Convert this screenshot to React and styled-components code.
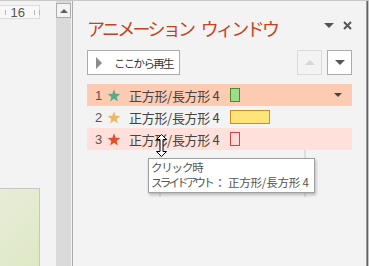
import styled, { createGlobalStyle } from "styled-components";

const Global = createGlobalStyle`
  html, body { margin: 0; padding: 0; }
  body {
    background: #f3f3f3;
    font-family: "Noto Sans CJK JP", "Liberation Sans", sans-serif;
    color: #444;
  }
`;

const Screen = styled.div`
  width: 369px;
  height: 266px;
  border-top: 1px solid #c8c8c8;
  box-sizing: border-box;
  display: flex;
  overflow: hidden;
  position: relative;
`;

const SlideArea = styled.div`
  width: 56px;
  display: flex;
  flex-direction: column;
`;

const Ruler = styled.div`
  width: 40px;
  height: 14px;
  margin-top: 4px;
  background: #f8f8f8;
  border: 1px solid #dcdcdc;
  border-left: none;
  box-sizing: border-box;
  display: flex;
  align-items: center;
  font-size: 13px;
  color: #555;
  font-family: "Liberation Sans", sans-serif;
  span { margin: 0 5px 0 5px; }
  i {
    width: 1px;
    height: 5px;
    background: #b8b8b8;
    margin-left: 4px;
  }
  i:first-child { margin-left: 5px; }
`;

const SlideThumb = styled.div`
  margin-top: auto;
  width: 40px;
  height: 78px;
  border: 1px solid #c6c6c6;
  border-left: none;
  border-bottom: none;
  box-sizing: border-box;
  background: linear-gradient(135deg, #e7edd6 0%, #dfe8c6 100%);
`;

const Scrollbar = styled.div`
  width: 15px;
  background: #dadada;
  padding-top: 2px;
`;

const ScrollButton = styled.div`
  width: 15px;
  height: 15px;
  box-sizing: border-box;
  background: #f3f3f3;
  border: 1px solid #acacac;
  display: flex;
  align-items: center;
  justify-content: center;
  &::after {
    content: "";
    border-left: 4px solid transparent;
    border-right: 4px solid transparent;
    border-bottom: 4px solid #606060;
  }
`;

const Divider = styled.div`
  width: 1px;
  margin-left: 1px;
  background: #a9a9a9;
`;

const Panel = styled.div`
  flex: 1;
  padding: 15px 14px 0 14px;
  display: flex;
  flex-direction: column;
  position: relative;
`;

const Header = styled.div`
  display: flex;
  align-items: flex-start;
  height: 34px;
`;

const Title = styled.h1`
  margin: 0;
  font-size: 18px;
  font-weight: normal;
  letter-spacing: -2.7px;
  word-spacing: 6px;
  line-height: 24px;
  color: #c4421d;
  white-space: pre;
`;

const HeaderIcons = styled.div`
  margin-left: auto;
  display: flex;
  align-items: center;
  gap: 9px;
  margin-top: 5px;
`;

const Caret = styled.span`
  width: 0;
  height: 0;
  border-left: ${(p) => p.$size}px solid transparent;
  border-right: ${(p) => p.$size}px solid transparent;
  border-top: ${(p) => p.$size}px solid ${(p) => p.$color || "#555"};
`;

const Toolbar = styled.div`
  display: flex;
  align-items: center;
  height: 25px;
`;

const PlayButton = styled.button`
  height: 25px;
  width: 93px;
  flex: none;
  box-sizing: border-box;
  background: #fff;
  border: 1px solid #ababab;
  display: flex;
  align-items: center;
  padding: 0 0 0 8px;
  font-family: inherit;
  font-size: 11.5px;
  letter-spacing: -1.7px;
  color: #333;
  white-space: nowrap;
  &::before {
    content: "";
    border-top: 6px solid transparent;
    border-bottom: 6px solid transparent;
    border-left: 6px solid #8c8c8c;
    margin-right: 12px;
  }
`;

const MoveButton = styled.div`
  width: 25px;
  height: 25px;
  box-sizing: border-box;
  background: ${(p) => (p.$disabled ? "#f3f3f3" : "#fff")};
  border: 1px solid ${(p) => (p.$disabled ? "#dadada" : "#ababab")};
  display: flex;
  align-items: center;
  justify-content: center;
  margin-left: ${(p) => (p.$push ? "auto" : `${p.$gap || 0}px`)};
`;

const UpCaret = styled.span`
  border-left: 5px solid transparent;
  border-right: 5px solid transparent;
  border-bottom: 5px solid #d6d6d6;
`;

const List = styled.div`
  margin-top: 9px;
  display: flex;
  flex-direction: column;
`;

const Row = styled.div`
  height: 22px;
  display: flex;
  align-items: center;
  padding: 0 8px;
  background: ${(p) => p.$bg || "transparent"};
  font-size: 13px;
  color: #444;
`;

const Num = styled.span`
  width: 7px;
  font-family: "Liberation Sans", sans-serif;
  font-size: 13px;
  color: #555;
`;

const StarIcon = styled.svg`
  margin-left: 5px;
  margin-right: 8px;
  flex: none;
`;

const Name = styled.span`
  width: 101px;
  white-space: pre;
  letter-spacing: -0.3px;
`;

const Bar = styled.span`
  height: ${(p) => p.$h}px;
  width: ${(p) => p.$w}px;
  box-sizing: border-box;
  background: ${(p) => p.$fill};
  border: 1px solid ${(p) => p.$line};
`;

const RowCaret = styled.span`
  margin-left: auto;
  margin-right: 2px;
  border-left: 4px solid transparent;
  border-right: 4px solid transparent;
  border-top: 4px solid #444;
`;

const Ticks = styled.div`
  margin-left: 72px;
  width: 147px;
  height: 47px;
  display: flex;
  justify-content: space-between;
  i {
    width: 2px;
    background: #dedede;
  }
`;

const Tooltip = styled.div`
  position: absolute;
  left: 75px;
  top: 157px;
  width: 167px;
  height: 35px;
  box-sizing: border-box;
  background: #fff;
  border: 1px solid #a0a0a0;
  box-shadow: 1px 2px 3px rgba(0, 0, 0, 0.25);
  padding: 1px 2px;
  font-size: 11.5px;
  letter-spacing: -0.2px;
  line-height: 15px;
  color: #555;
  white-space: pre;
`;

const Kana = styled.span`
  letter-spacing: ${(p) => p.$tight}px;
`;

const Cursor = styled.svg`
  position: absolute;
  left: 156px;
  top: 133px;
`;

const RightEdge = styled.div`
  width: 3px;
  background: linear-gradient(90deg, #9a9a9a 0 1px, #b8452a 1px 2px, #c4c4c4 2px 3px);
`;

const Star = ({ color }) => (
  <StarIcon width="14" height="13" viewBox="0 0 14 13.5">
    <polygon
      fill={color}
      points="7,0.3 8.7,4.95 13.66,5.14 9.76,8.2 11.1,12.96 7,10.2 2.88,12.96 4.24,8.2 0.34,5.14 5.3,4.95"
    />
  </StarIcon>
);

const rows = [
  { n: 1, star: "#58a98c", bg: "#fccbb2", bar: { w: 10, h: 14, fill: "#9ddc88", line: "#4c8a2e" }, caret: true },
  { n: 2, star: "#ecb865", bg: "transparent", bar: { w: 40, h: 14, fill: "#ffe47a", line: "#d08c1c" } },
  { n: 3, star: "#e0502e", bg: "#ffe0da", bar: { w: 10, h: 14, fill: "#ffd8d6", line: "#c8464a" } },
];

export default function App() {
  return (
    <>
      <Global />
      <Screen>
        <SlideArea>
          <Ruler>
            <i />
            <span>16</span>
            <i />
            <i />
          </Ruler>
          <SlideThumb />
        </SlideArea>
        <Scrollbar>
          <ScrollButton />
        </Scrollbar>
        <Divider />
        <Panel>
          <Header>
            <Title>アニメーション ウィンドウ</Title>
            <HeaderIcons>
              <Caret $size={5} $color="#555" />
              <svg width="9" height="9" viewBox="0 0 9 9">
                <path d="M1 1 L8 8 M8 1 L1 8" stroke="#555" strokeWidth="2" />
              </svg>
            </HeaderIcons>
          </Header>
          <Toolbar>
            <PlayButton>ここから再生</PlayButton>
            <MoveButton $disabled $push>
              <UpCaret />
            </MoveButton>
            <MoveButton $gap={5}>
              <Caret $size={5} $color="#555" />
            </MoveButton>
          </Toolbar>
          <List>
            {rows.map((r) => (
              <Row key={r.n} $bg={r.bg}>
                <Num>{r.n}</Num>
                <Star color={r.star} />
                <Name>正方形/長方形 4</Name>
                <Bar $w={r.bar.w} $h={r.bar.h} $fill={r.bar.fill} $line={r.bar.line} />
                {r.caret && <RowCaret />}
              </Row>
            ))}
            <Ticks>
              <i />
              <i />
            </Ticks>
          </List>
          <Tooltip>
            <Kana $tight={-1.2}>クリック</Kana>時{"\n"}
            <Kana $tight={-2.8}>スライドアウト</Kana> ： 正方形/長方形 4
          </Tooltip>
        </Panel>
        <RightEdge />
        <Cursor width="11" height="23" viewBox="0 0 11 23">
          <path
            d="M5.5 0.5 L10.5 5.5 L7 5.5 L7 17.5 L10.5 17.5 L5.5 22.5 L0.5 17.5 L4 17.5 L4 5.5 L0.5 5.5 Z"
            fill="#fff"
            stroke="#000"
            strokeWidth="1"
          />
        </Cursor>
      </Screen>
    </>
  );
}
